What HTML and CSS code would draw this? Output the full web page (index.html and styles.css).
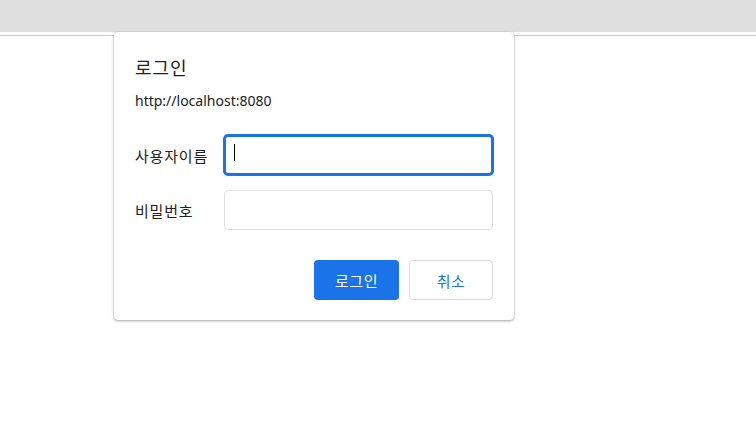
FILE: index.html
```html
<!DOCTYPE html>
<html lang="ko">
<head>
  <meta charset="UTF-8">
  <meta name="viewport" content="width=device-width, initial-scale=1.0">
  <title>로그인</title>
  <link rel="stylesheet" href="styles.css">
</head>
<body>
  <header class="toolbar"></header>
  <div class="divider"></div>

  <div class="dialog">
    <h1 class="dialog-title">로그인</h1>
    <p class="dialog-origin">http://localhost:8080</p>
    <form class="login-form">
      <div class="field">
        <label for="username">사용자이름</label>
        <div class="input-wrap focused">
          <input type="text" id="username" name="username">
          <span class="caret"></span>
        </div>
      </div>
      <div class="field">
        <label for="password">비밀번호</label>
        <div class="input-wrap">
          <input type="password" id="password" name="password">
        </div>
      </div>
      <div class="actions">
        <button type="submit" class="btn primary">로그인</button>
        <button type="button" class="btn secondary">취소</button>
      </div>
    </form>
  </div>
</body>
</html>
```

FILE: styles.css
```css
body {
  margin: 0;
  padding: 0;
  background-color: #fff;
  font-family: "Noto Sans", "Noto Sans CJK KR", sans-serif;
  color: #202124;
}
.toolbar {
  height: 32px;
  background-color: #dfdfdf;
}
.divider {
  margin-top: 3px;
  height: 1px;
  background-color: #cfcfcf;
}
.dialog {
  position: absolute;
  top: 32px;
  left: 114px;
  width: 400px;
  height: 288px;
  box-sizing: border-box;
  padding: 21px 21px 0 21px;
  background-color: #fff;
  border-radius: 4px;
  box-shadow: 0 1px 3px rgba(0, 0, 0, 0.35), 0 0 1px rgba(0, 0, 0, 0.2);
}
.dialog-title {
  margin: 0;
  font-family: "Noto Sans CJK KR", sans-serif;
  font-size: 18px;
  font-weight: normal;
  letter-spacing: 1px;
  line-height: 28px;
  color: #202124;
}
.dialog-origin {
  margin: 10px 0 0 0;
  font-size: 14px;
  line-height: 20px;
  color: #202124;
}
.login-form {
  margin-top: 24px;
}
.field {
  display: flex;
  align-items: center;
  margin-bottom: 15px;
}
.field label {
  width: 89px;
  font-family: "Noto Sans CJK KR", sans-serif;
  font-size: 15px;
  letter-spacing: 0.8px;
  color: #202124;
}
.input-wrap {
  position: relative;
  width: 270px;
  height: 40px;
}
.input-wrap input {
  box-sizing: border-box;
  width: 100%;
  height: 100%;
  margin: 0;
  padding: 0 10px;
  border: 1px solid #e0e0e0;
  border-radius: 4px;
  outline: none;
  font-size: 14px;
}
.input-wrap.focused input {
  border: 2px solid #1a73e8;
  box-shadow: 0 0 0 1px #1a73e8;
}
.caret {
  position: absolute;
  left: 10px;
  top: 9px;
  width: 1px;
  height: 17px;
  background-color: #000;
}
.actions {
  display: flex;
  justify-content: flex-end;
  gap: 10px;
  margin-top: 30px;
}
.btn {
  box-sizing: border-box;
  width: 85px;
  height: 40px;
  border-radius: 4px;
  font-family: "Noto Sans CJK KR", sans-serif;
  font-size: 15px;
  letter-spacing: 0.5px;
  cursor: pointer;
}
.primary {
  background-color: #1a73e8;
  border: none;
  color: #fff;
}
.secondary {
  width: 84px;
  background-color: #fff;
  border: 1px solid #dadce0;
  color: #1a73e8;
}
```
